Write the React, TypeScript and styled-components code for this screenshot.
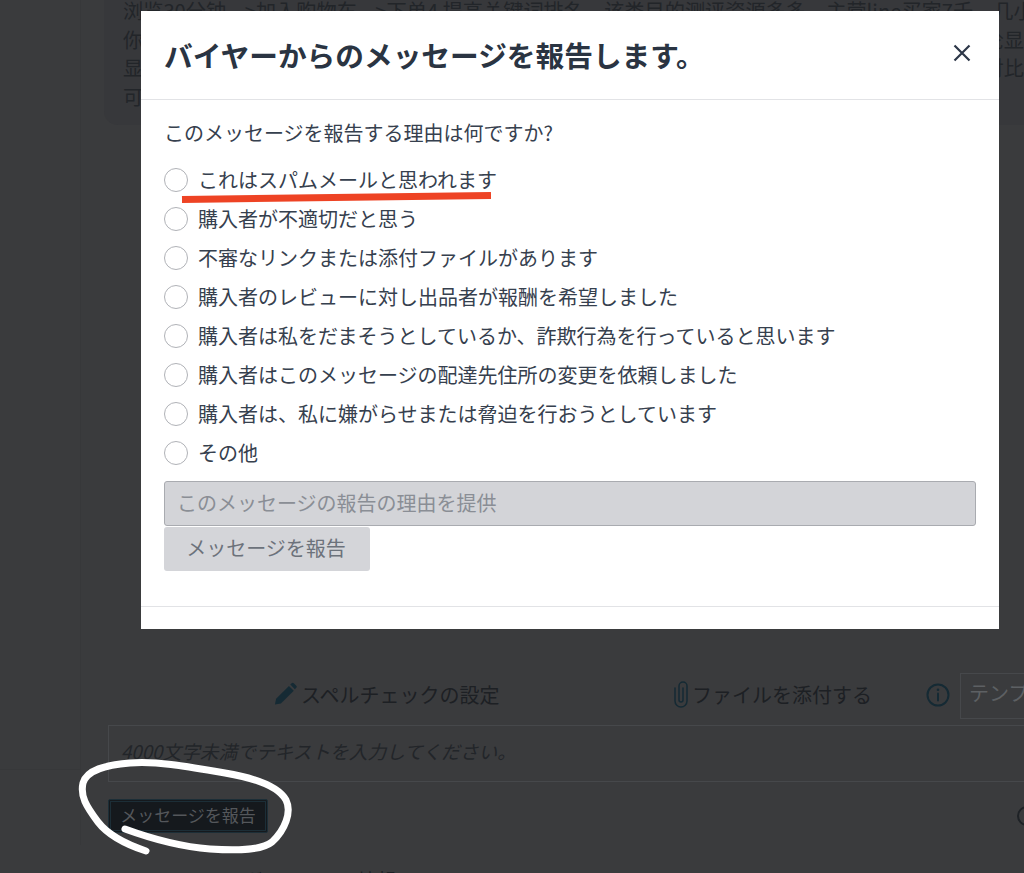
import React from "react";
import styled, { createGlobalStyle } from "styled-components";

const Global = createGlobalStyle`
  html, body { margin: 0; padding: 0; height: 873px; overflow: hidden; background: #3a3b3d; }
  body { font-family: "Noto Sans CJK JP", sans-serif; }
  #root { height: 873px; }
`;

const CJK = `"Noto Sans CJK JP", "Liberation Sans", sans-serif`;

const Page = styled.div`
  position: relative;
  width: 1024px;
  height: 873px;
  overflow: hidden;
  background: #3a3b3d;
  font-family: ${CJK};
`;

const Shell = styled.div`
  display: flex;
  height: 845px;
`;

const Sidebar = styled.aside`
  width: 81px;
  box-sizing: border-box;
  flex: none;
  border-right: 1px solid #37383a;
  display: flex;
  flex-direction: column;
`;

const SidebarTop = styled.div`
  height: 769px;
  flex: none;
  border-bottom: 1px solid #37383a;
`;

const Main = styled.main`
  flex: 1;
  min-width: 0;
  display: flex;
  flex-direction: column;
`;

const Bubble = styled.div`
  margin: -7px 0 0 23px;
  height: 132px;
  box-sizing: border-box;
  flex: none;
  padding: 4px 0 0 19px;
  background: #37383b;
  border-radius: 0 0 0 14px;
  color: #222529;
  font-size: 20.2px;
  line-height: 28.7px;
`;

const BubbleLine = styled.div`
  display: flex;
  justify-content: space-between;
  white-space: nowrap;
  overflow: hidden;
  height: 28.7px;
`;

const Toolbar = styled.div`
  display: flex;
  align-items: center;
  height: 46px;
  margin-top: 548px;
  padding-left: 193px;
  color: #1d2024;
  font-size: 20px;
  white-space: nowrap;
`;

const ToolItem = styled.div<{ $w: number }>`
  display: flex;
  align-items: center;
  gap: 4px;
  width: ${(p) => p.$w}px;
  height: 36px;
  margin-bottom: 4px;
  flex: none;
`;

const IconBlue = styled.span`
  display: inline-flex;
  color: #152a34;
`;

const InfoSlot = styled.div`
  display: flex;
  width: 34px;
  flex: none;
  margin-left: 53px;
  margin-bottom: 2px;
  color: #152a34;
`;

const TemplateBox = styled.div`
  flex: none;
  width: 120px;
  height: 46px;
  box-sizing: border-box;
  border: 1px solid #46484b;
  padding: 0 0 0 8px;
  line-height: 38px;
  color: #5d6063;
  font-size: 20px;
  overflow: hidden;
  white-space: nowrap;
`;

const Composer = styled.div`
  flex: none;
  height: 57px;
  margin: 6px 0 0 27px;
  box-sizing: border-box;
  border: 1px solid #46484b;
  border-right: 0;
  padding: 12px 0 0 12px;
  color: #222529;
  font-size: 18.7px;
  line-height: 26px;
  font-style: italic;
`;

const ActionRow = styled.div`
  flex: none;
  display: flex;
  align-items: center;
  justify-content: space-between;
  margin: 17px 0 0 27px;
  height: 34px;
`;

const DarkButton = styled.div`
  box-sizing: border-box;
  width: 160px;
  height: 34px;
  background: #15191d;
  border: 1px solid #1c2e37;
  outline: 1px solid #1c2e37;
  outline-offset: -3px;
  border-radius: 2px;
  color: #54575b;
  font-size: 17px;
  line-height: 29px;
  text-align: center;
  white-space: nowrap;
`;

const RingEdge = styled.span`
  width: 20px;
  height: 20px;
  margin-right: -13px;
  border: 2px solid #1e2226;
  border-radius: 50%;
  box-sizing: border-box;
`;

const Footer = styled.div`
  padding: 21px 0 0 112px;
  color: #1d2024;
  font-size: 19px;
  line-height: 28px;
  white-space: nowrap;
`;

const Modal = styled.section`
  position: absolute;
  left: 141px;
  top: 11px;
  width: 858px;
  height: 618px;
  background: #fff;
  color: #2d3748;
  display: flex;
  flex-direction: column;
`;

const ModalHeader = styled.header`
  flex: none;
  height: 89px;
  box-sizing: border-box;
  border-bottom: 1px solid #e2e3e6;
  padding: 0 28px 1px 23px;
  display: flex;
  align-items: center;
  justify-content: space-between;
`;

const Title = styled.h2`
  margin: 0;
  font-size: 28.7px;
  line-height: 40px;
  font-weight: 700;
  color: #2a3442;
  white-space: nowrap;
`;

const CloseIcon = styled.svg`
  display: block;
  margin-bottom: 3px;
`;

const ModalBody = styled.div`
  flex: none;
  height: 507px;
  box-sizing: border-box;
  border-bottom: 1px solid #e2e3e6;
  padding: 19px 23px 0;
  display: flex;
  flex-direction: column;
`;

const Question = styled.p`
  margin: 0 0 13px;
  font-size: 20px;
  line-height: 28px;
  color: #36404e;
  white-space: nowrap;
`;

const RadioRow = styled.label`
  display: flex;
  align-items: center;
  height: 39px;
  gap: 10px;
  font-size: 20px;
  color: #36404e;
  white-space: nowrap;
`;

const RadioCircle = styled.span`
  width: 24px;
  height: 24px;
  flex: none;
  box-sizing: border-box;
  border: 1.5px solid #b0b2b7;
  border-radius: 50%;
  background: #fff;
`;

const ReasonInput = styled.div`
  margin-top: 9px;
  width: 812px;
  height: 45px;
  flex: none;
  box-sizing: border-box;
  background: #d3d4d8;
  border: 1px solid #a9abb0;
  border-radius: 3px;
  padding-left: 12px;
  line-height: 42px;
  font-size: 20px;
  color: #8a8e95;
  white-space: nowrap;
`;

const SubmitButton = styled.div`
  margin-top: 1px;
  width: 206px;
  height: 44px;
  flex: none;
  box-sizing: border-box;
  padding-right: 2px;
  background: #d4d5d9;
  border-radius: 3px;
  line-height: 41px;
  font-size: 20px;
  text-align: center;
  color: #6c727b;
`;

const Annotations = styled.svg`
  position: absolute;
  left: 0;
  top: 0;
  pointer-events: none;
`;

const reasons = [
  "これはスパムメールと思われます",
  "購入者が不適切だと思う",
  "不審なリンクまたは添付ファイルがあります",
  "購入者のレビューに対し出品者が報酬を希望しました",
  "購入者は私をだまそうとしているか、詐欺行為を行っていると思います",
  "購入者はこのメッセージの配達先住所の変更を依頼しました",
  "購入者は、私に嫌がらせまたは脅迫を行おうとしています",
  "その他",
];

export default function App() {
  return (
    <Page>
      <Global />
      <Shell>
        <Sidebar>
          <SidebarTop />
        </Sidebar>
        <Main>
          <Bubble>
            <BubbleLine>
              <span>浏览30分钟 --&gt;加入购物车 --&gt;下单4 提高关键词排名，该类目的测评资源多多，主营line买家7千，几小</span>
            </BubbleLine>
            <BubbleLine>
              <span>你</span>
              <span>论显</span>
            </BubbleLine>
            <BubbleLine>
              <span>显</span>
              <span>对比</span>
            </BubbleLine>
            <BubbleLine>
              <span>可</span>
            </BubbleLine>
          </Bubble>
          <Toolbar>
            <ToolItem $w={400}>
              <IconBlue>
                <svg width="23" height="24" viewBox="0 0 24 24" fill="currentColor">
                  <path d="M1 23l1.2-6L15.600 3.600l5 5L7.200 22z" />
                  <path d="M17 2.200l1.400-1.400a1.600 1.600 0 0 1 2.200 0l2.600 2.600a1.600 1.600 0 0 1 0 2.200L21.800 7z" />
                </svg>
              </IconBlue>
              スペルチェックの設定
            </ToolItem>
            <ToolItem $w={199}>
              <IconBlue>
                <svg width="14" height="27" viewBox="0 0 14 27" fill="none" stroke="currentColor" strokeWidth="1.500" strokeLinecap="round">
                  <path d="M9 7V19a2 2 0 0 1-4 0V5a4 4 0 0 1 8 0V20a6 6 0 0 1-12 0V7" />
                </svg>
              </IconBlue>
              ファイルを添付する
            </ToolItem>
            <InfoSlot>
              <svg width="24" height="24" viewBox="0 0 24 24" fill="none" stroke="currentColor" strokeWidth="2">
                <circle cx="12" cy="12" r="10.500" />
                <path d="M12 10.500v7" strokeLinecap="round" />
                <circle cx="12" cy="6.800" r="1.300" fill="currentColor" stroke="none" />
              </svg>
            </InfoSlot>
            <TemplateBox>テンプレート</TemplateBox>
          </Toolbar>
          <Composer>4000文字未満でテキストを入力してください。</Composer>
          <ActionRow>
            <DarkButton>メッセージを報告</DarkButton>
            <RingEdge />
          </ActionRow>
        </Main>
      </Shell>
      <Footer>キャンペーンのガイドライン情報</Footer>

      <Modal>
        <ModalHeader>
          <Title>バイヤーからのメッセージを報告します。</Title>
          <CloseIcon width="18" height="18" viewBox="0 0 18 18" fill="none" stroke="#2d3748" strokeWidth="2.200">
            <path d="M1.500 1.500l15 15M16.500 1.500l-15 15" />
          </CloseIcon>
        </ModalHeader>
        <ModalBody>
          <Question>このメッセージを報告する理由は何ですか?</Question>
          {reasons.map((r) => (
            <RadioRow key={r}>
              <RadioCircle />
              {r}
            </RadioRow>
          ))}
          <ReasonInput>このメッセージの報告の理由を提供</ReasonInput>
          <SubmitButton>メッセージを報告</SubmitButton>
        </ModalBody>
      </Modal>

      <Annotations width="1024" height="873" viewBox="0 0 1024 873" fill="none">
        <path d="M182 199.500L491 195.500" stroke="#ee4324" strokeWidth="7" />
        <path
          d="M146 851C128 845 108 835 98 822C86 806 80 796 83 783C87 770 105 765 130 763C160 761 190 767 225 773C255 778 278 786 286 800C292 812 285 830 272 842C262 850 240 851 210 849C185 847 155 840 125 829"
          stroke="#fff"
          strokeWidth="7"
          strokeLinecap="round"
          strokeLinejoin="round"
        />
      </Annotations>
    </Page>
  );
}
